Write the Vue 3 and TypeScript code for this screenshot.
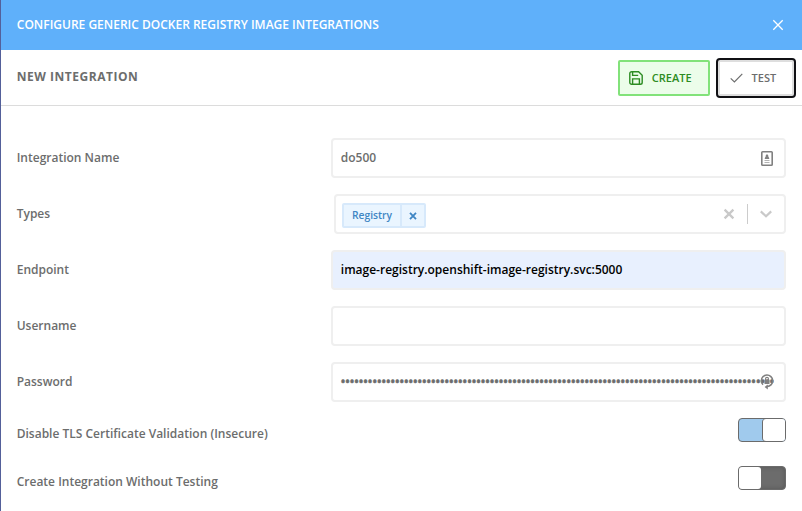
<script setup lang="ts">
import { ref } from 'vue'

const integrationName = ref('do500')
const endpoint = ref('image-registry.openshift-image-registry.svc:5000')
const username = ref('')
const passwordMask = '•'.repeat(96)
const disableTls = ref(true)
const skipTest = ref(false)
</script>

<template>
  <div class="panel">
    <header class="titlebar">
      <h1>CONFIGURE GENERIC DOCKER REGISTRY IMAGE INTEGRATIONS</h1>
      <svg class="close" viewBox="0 0 12 12"><path d="M1.3 1.3l9.4 9.4M10.7 1.3l-9.4 9.4" /></svg>
    </header>
    <div class="toolbar">
      <h2>NEW INTEGRATION</h2>
      <button class="btn create">
        <svg class="save" viewBox="0 0 14 14">
          <path d="M2.6.8h7L13.2 4.2v7.2a1.8 1.8 0 0 1-1.8 1.8H2.6a1.8 1.8 0 0 1-1.8-1.8V2.6A1.8 1.8 0 0 1 2.6.8z" />
          <path d="M3.6 1v3.4h5.6M3.6 13V7.9h6.8V13" />
        </svg>
        <span>CREATE</span>
      </button>
      <button class="btn test">
        <svg class="check" viewBox="0 0 13 10"><path d="M.7 5.4l3.7 3.5L12.3.9" /></svg>
        <span>TEST</span>
      </button>
    </div>
    <main class="form">
      <div class="row">
        <label>Integration Name</label>
        <div class="field">
          <span>{{ integrationName }}</span>
          <svg class="contact" viewBox="0 0 12 15">
            <rect x=".8" y=".8" width="10.4" height="13.4" rx=".8" />
            <path class="solid" d="M6 3l1.3 1.5v1L8.2 7v1H3.8V7l.9-1.5v-1z" />
            <path class="solid lines" d="M3.5 9h5v1h-5zM3.5 11h5v1h-5z" />
          </svg>
        </div>
      </div>
      <div class="row">
        <label>Types</label>
        <div class="field select">
          <div class="tag">
            <span class="tag-name">Registry</span>
            <span class="tag-x"><svg viewBox="0 0 8 8"><path d="M1 .8l6 6.4M7 .8L1 7.2" /></svg></span>
          </div>
          <svg class="clear" viewBox="0 0 12 12"><path d="M1.6 1.6l8.8 8.8M10.4 1.6l-8.8 8.8" /></svg>
          <i class="divider"></i>
          <svg class="chevron" viewBox="0 0 14 8"><path d="M1.8 1.4L7 6.3l5.2-4.9" /></svg>
        </div>
      </div>
      <div class="row">
        <label>Endpoint</label>
        <div class="field filled"><span>{{ endpoint }}</span></div>
      </div>
      <div class="row">
        <label>Username</label>
        <div class="field"><span>{{ username }}</span></div>
      </div>
      <div class="row">
        <label>Password</label>
        <div class="field password">
          <span class="mask">{{ passwordMask }}</span>
          <svg class="key" viewBox="0 0 14 18">
            <path d="M3 11.8A5.7 5.7 0 1 1 11.2 11.6Q9.6 13.4 6.6 13.6" />
            <path class="solid" d="M7.8 11.4v5.2L4.6 14zM4.5 6.8h5v4.2h-5z" />
            <path class="shackle" d="M5.5 7V5.9a1.5 1.5 0 0 1 3 0V7" />
          </svg>
        </div>
      </div>
      <div class="row switch-row">
        <label>Disable TLS Certificate Validation (Insecure)</label>
        <button class="switch" :class="{ on: disableTls }" @click="disableTls = !disableTls"><i></i></button>
      </div>
      <div class="row switch-row">
        <label>Create Integration Without Testing</label>
        <button class="switch" :class="{ on: skipTest }" @click="skipTest = !skipTest"><i></i></button>
      </div>
    </main>
  </div>
</template>

<style>
body { margin: 0; background: #fff; }
</style>

<style scoped>
* { box-sizing: border-box; }
.panel {
  height: 511px;
  overflow: hidden;
  border-left: 1px solid #53609a;
  font: 600 12px/18px "Open Sans", sans-serif;
  color: #6c6d6d;
}
svg { display: block; fill: none; stroke: currentColor; flex: none; }
.solid { fill: currentColor; stroke: none; }
h1, h2 { margin: 0; font: inherit; white-space: nowrap; }
button { font: inherit; margin: 0; padding: 0; }
.titlebar {
  height: 50px;
  padding: 0 18px 0 15.8px;
  display: flex;
  align-items: center;
  justify-content: space-between;
  background: #5fb0fa;
  color: #fff;
}
.close { width: 12px; height: 12px; stroke-width: 1.3; }
.toolbar {
  height: 56px;
  padding: 0 6px 0 15.7px;
  display: flex;
  align-items: center;
  border-bottom: 1px solid #dcdcdc;
}
.toolbar h2 { flex: 1; font-weight: 700; letter-spacing: .53px; padding-bottom: 2px; }
.btn { display: flex; align-items: center; font-size: 11px; border-radius: 2px; }
.create {
  width: 92px;
  height: 36px;
  padding-left: 9px;
  gap: 8.8px;
  border: 2px solid #82e27a;
  background: #ecfdea;
  color: #2c8c22;
}
.save { width: 14px; height: 14px; stroke-width: 1.4; }
.test {
  width: 80px;
  height: 40px;
  margin-left: 6px;
  padding-left: 10px;
  gap: 9px;
  background: #fff;
  border: 2px solid #101014;
  box-shadow: inset 0 0 0 2px #dedede;
  border-radius: 4px;
  color: #6c6d6d;
}
.check { width: 13px; height: 10px; stroke-width: 1.2; margin-left: 1.6px; }
.form { padding: 32px 16px 0 15.7px; display: flex; flex-direction: column; gap: 16px; }
.row { display: flex; height: 40px; justify-content: space-between; align-items: center; }
.row label { white-space: nowrap; }
.field {
  width: 455px;
  height: 40px;
  border: 2px solid #efefef;
  border-radius: 4px;
  padding: 0 11px 0 7.8px;
  display: flex;
  align-items: center;
  justify-content: space-between;
  background: #fff;
}
.filled { background: #e8f0fe; color: #000; }
.contact { width: 12px; height: 15px; stroke-width: 1.6; color: #808080; }
.lines { opacity: .6; }
.select { width: 452px; padding: 0 11px 0 6px; }
.tag {
  height: 25px;
  margin-top: 3px;
  display: flex;
  border: 2px solid #d7e9fb;
  border-radius: 2px;
  background: #eaf5ff;
  color: #3f86c4;
  font-size: 10.3px;
  line-height: 21px;
  margin-right: auto;
}
.tag-name { width: 58px; text-align: center; border-right: 2px solid #d7e9fb; }
.tag-x { width: 22px; display: flex; align-items: center; justify-content: center; }
.tag-x svg { width: 8px; height: 8px; stroke-width: 1.8; }
.clear { width: 12px; height: 12px; stroke-width: 2.3; color: #c9c9c9; }
.divider { width: 1px; height: 20px; background: #ccc; margin: 0 11px 0 12px; }
.chevron { width: 14px; height: 8px; stroke-width: 2.2; color: #c9c9c9; }
.password { position: relative; }
.mask { white-space: nowrap; flex: none; -webkit-text-stroke: .5px currentColor; }
.key { position: absolute; right: 10px; top: 9px; width: 14px; height: 18px; stroke-width: 1.6; color: #808080; }
.shackle { stroke-width: 1.1; }
.switch-row { height: 24px; }
.switch-row + .switch-row { margin-top: 8px; }
.switch-row label { padding: 7px 0 0; }
.switch {
  width: 48px;
  height: 24px;
  border: 1px solid #6b6b6b;
  border-radius: 4px;
  background: #6c6c6c;
  box-shadow: inset 0 0 4px #555;
  display: flex;
}
.switch i { width: 22px; height: 22px; background: #fff; border-radius: 3px; }
.switch.on { background: #a0caed; justify-content: flex-end; box-shadow: none; }
.switch.on i { box-shadow: -1px 0 0 #6b6b6b; }
</style>
